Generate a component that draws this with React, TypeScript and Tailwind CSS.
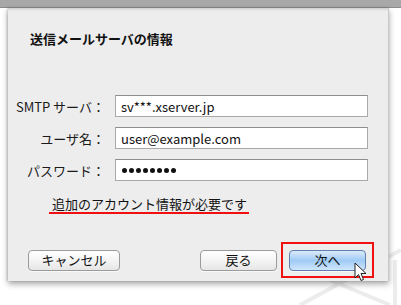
import React from "react";

const jp = { fontFamily: '"Noto Sans CJK JP", "Noto Sans", sans-serif' };

function Field({ label, value, dots }: { label: string; value: string; dots?: boolean }) {
  return (
    <div className="flex items-center h-[22px]">
      <div className="w-[98px] text-right text-[13px] leading-none text-[#1a1a1a] pr-[1px]">{label}</div>
      <div className="ml-[9px] w-[253px] h-[22px] bg-white border border-[#a9a9a9] border-t-[#8e8e8e] flex items-center pl-[5px] text-[13px] text-[#111]">
        {dots ? (
          <div className="flex gap-[2px] pl-[1px]">
            {value.split("").map((_, i) => (
              <span key={i} className="w-[5px] h-[5px] rounded-full bg-[#111]" />
            ))}
          </div>
        ) : (
          <span className="leading-none">{value}</span>
        )}
      </div>
    </div>
  );
}

function Button({ children, primary, className }: { children: React.ReactNode; primary?: boolean; className?: string }) {
  return (
    <div
      className={
        "h-[21px] rounded-[4px] border flex items-center justify-center text-[13px] text-[#111] shadow-[0_1px_0_rgba(255,255,255,0.6)] " +
        (primary
          ? "border-[#5f7fae] bg-gradient-to-b from-[#dbeafb] via-[#9fcbf5] to-[#cfe6fc] "
          : "border-[#9b9b9b] bg-gradient-to-b from-[#ffffff] via-[#f4f4f4] to-[#e6e6e6] ") +
        (className ?? "")
      }
    >
      {children}
    </div>
  );
}

export default function App() {
  return (
    <div className="relative w-[401px] h-[305px] bg-white overflow-hidden" style={jp}>
      <svg className="absolute left-0 top-0" width="401" height="305">
        <g stroke="#ececec" strokeWidth="4" fill="none">
          <line x1="300" y1="305" x2="401" y2="250" />
          <line x1="330" y1="280" x2="390" y2="305" />
          <line x1="395" y1="260" x2="395" y2="305" />
        </g>
      </svg>
      <div className="relative h-[8px] bg-[#a8a8a8] border-b border-[#8c8c8c]" />
      <div className="relative ml-[8px] w-[381px] h-[273px] bg-[#ededed] border-r border-[#c8c8c8] shadow-[0_3px_6px_rgba(0,0,0,0.35),-1px_0_2px_rgba(0,0,0,0.15)]">
        <div className="h-[3px] bg-gradient-to-b from-[#cfcfcf] to-[#ededed]" />
        <div className="pl-[22px] mt-[19px] text-[13px] font-bold leading-[18px] text-[#111]">送信メールサーバの情報</div>
        <div className="mt-[47px] flex flex-col gap-[10px]">
          <Field label="SMTP サーバ：" value="sv***.xserver.jp" />
          <Field label="ユーザ名：" value="user@example.com" />
          <Field label="パスワード：" value="12345678" dots />
        </div>
        <div className="mt-[15px] ml-[41px] w-[200px]">
          <div className="pl-[3px] text-[13px] leading-[15px] text-[#111]">追加のアカウント情報が必要です</div>
          <div className="h-[2px] bg-[#f01010] mt-[1px]" />
        </div>
        <div className="mt-[28px] flex items-center">
          <Button className="ml-[20px] w-[92px]">キャンセル</Button>
          <Button className="ml-[80px] w-[77px]">戻る</Button>
          <div className="ml-[4px] w-[93px] h-[36px] border-2 border-[#f01010] flex items-center justify-center">
            <Button primary className="w-[77px]">次へ</Button>
          </div>
        </div>
      </div>
      <svg className="absolute left-[354px] top-[262px]" width="16" height="22" viewBox="0 0 16 22">
        <path d="M1 1 L1 16 L4.5 12.5 L7 18.5 L9.5 17.5 L7 11.5 L12 11.5 Z" fill="#ffffff" stroke="#222" strokeWidth="1" strokeLinejoin="round" />
      </svg>
    </div>
  );
}
